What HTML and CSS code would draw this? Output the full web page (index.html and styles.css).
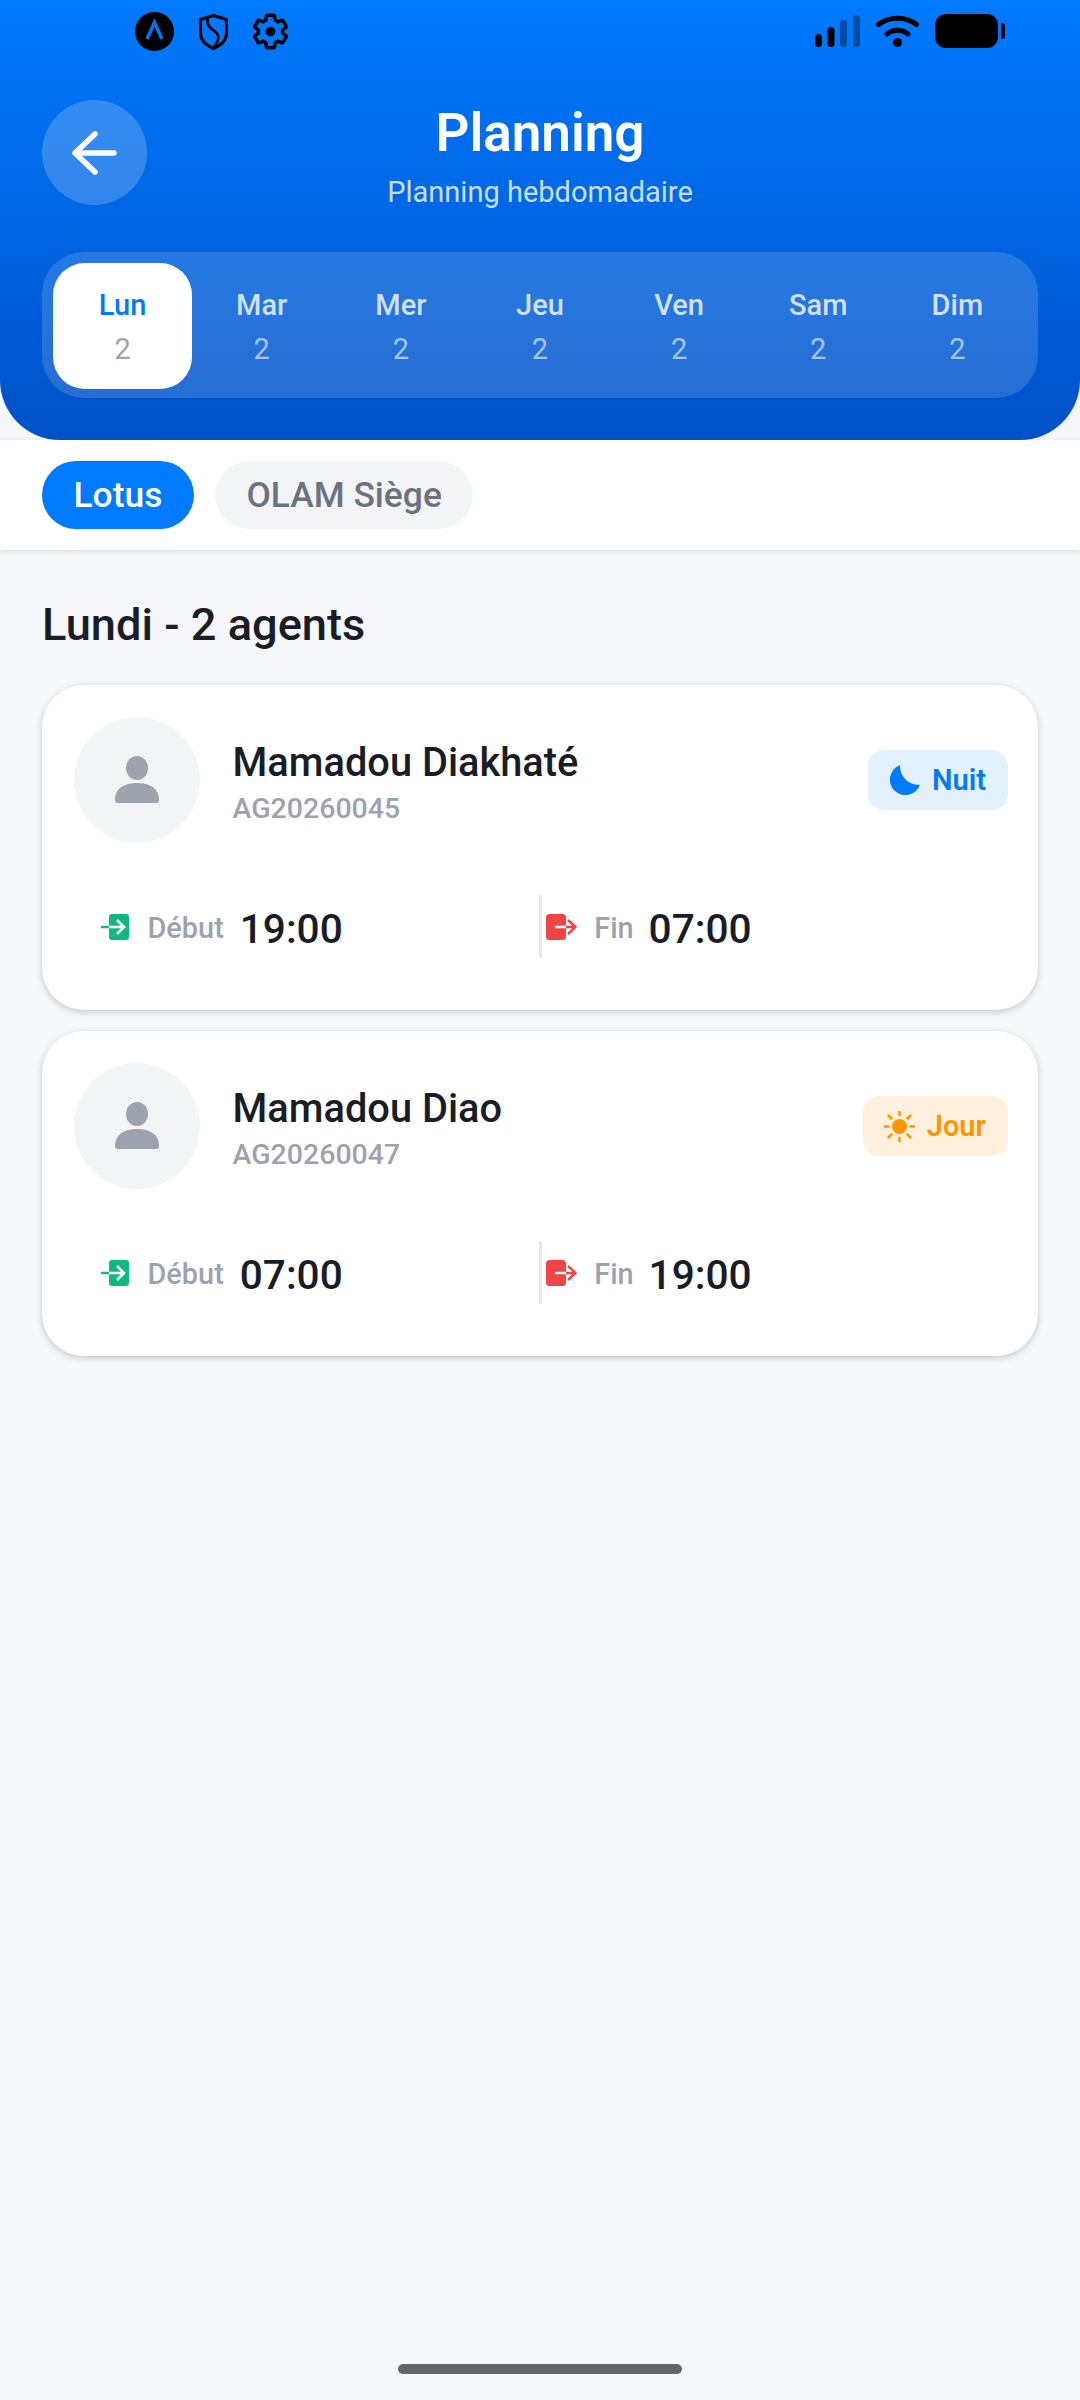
FILE: index.html
```html
<!DOCTYPE html>
<html lang="fr">
<head>
<meta charset="utf-8">
<title>Planning</title>
<link rel="stylesheet" href="styles.css">
</head>
<body>
<div class="page">
  <header class="hero">
    <div class="status">
      <div class="status-left">
        <svg class="i-expo" viewBox="0 0 39 39"><circle cx="19.5" cy="19.5" r="19.5" fill="#000"/><path d="M12 27 19.5 10.500 27 27" fill="none" stroke="#0073f0" stroke-width="3.600"/></svg>
        <svg class="i-shield" viewBox="0 0 29 36"><path d="M14.500 1.500 27.500 5.500V19C27.500 26 21.500 31.500 14.500 34.500 7.500 31.500 1.500 26 1.500 19V5.500Z" fill="none" stroke="#000" stroke-width="3" stroke-linejoin="round"/><path d="M9 4C7 11 11 14 16 17.500 21 21 20 26.500 15 33" fill="none" stroke="#000" stroke-width="2.600"/></svg>
        <svg class="i-gear" viewBox="0 0 24 24"><path d="M19.43 12.98c.04-.32.07-.64.07-.98 0-.34-.03-.66-.07-.98l2.11-1.65c.19-.15.24-.42.12-.64l-2-3.46c-.09-.16-.26-.25-.44-.25-.06 0-.12.01-.17.03l-2.49 1c-.52-.4-1.08-.73-1.69-.98l-.38-2.65C14.46 2.18 14.25 2 14 2h-4c-.25 0-.46.18-.49.42l-.38 2.65c-.61.25-1.17.59-1.69.98l-2.49-1c-.06-.02-.12-.03-.18-.03-.17 0-.34.09-.43.25l-2 3.46c-.13.22-.07.49.12.64l2.11 1.65c-.04.32-.07.65-.07.98 0 .33.03.66.07.98l-2.11 1.65c-.19.15-.24.42-.12.64l2 3.46c.09.16.26.25.44.25.06 0 .12-.01.17-.03l2.49-1c.52.4 1.08.73 1.69.98l.38 2.65c.03.24.24.42.49.42h4c.25 0 .46-.18.49-.42l.38-2.65c.61-.25 1.17-.59 1.69-.98l2.49 1c.06.02.12.03.18.03.17 0 .34-.09.43-.25l2-3.46c.12-.22.07-.49-.12-.64l-2.11-1.65z" fill="none" stroke="#000" stroke-width="2.100"/><circle cx="12" cy="12" r="3" fill="#000"/></svg>
      </div>
      <div class="status-right">
        <svg class="i-signal" viewBox="0 0 45 32"><rect x="0" y="19" width="7" height="13" rx="3.500"/><rect x="12.500" y="12" width="7" height="20" rx="3.500"/><rect x="25" y="5" width="7" height="27" rx="3.500" opacity=".35"/><rect x="38" y="0" width="7" height="32" rx="3.500" opacity=".35"/></svg>
        <svg class="i-wifi" viewBox="0 0 43 32"><path d="M2.500 9.500C13 1 30 1 40.500 9.500" fill="none" stroke="#000" stroke-width="5" stroke-linecap="round"/><path d="M11 19C17 14 26 14 32 19" fill="none" stroke="#000" stroke-width="5" stroke-linecap="round"/><circle cx="21.500" cy="27.500" r="4.500"/></svg>
        <span class="battery"></span>
        <span class="battery-nub"></span>
      </div>
    </div>
    <div class="hero-row">
      <button class="back" type="button">
        <svg viewBox="0 0 46 44"><path d="M3 22H42M23 3 3 22 23 41" fill="none" stroke="#fff" stroke-width="5.500" stroke-linecap="round" stroke-linejoin="round"/></svg>
      </button>
      <div class="hero-titles">
        <h1 class="hero-title">Planning</h1>
        <p class="hero-sub">Planning hebdomadaire</p>
      </div>
      <div class="hero-spacer"></div>
    </div>
    <nav class="days">
      <div class="day day-active"><span class="day-name">Lun</span><span class="day-count">2</span></div>
      <div class="day"><span class="day-name">Mar</span><span class="day-count">2</span></div>
      <div class="day"><span class="day-name">Mer</span><span class="day-count">2</span></div>
      <div class="day"><span class="day-name">Jeu</span><span class="day-count">2</span></div>
      <div class="day"><span class="day-name">Ven</span><span class="day-count">2</span></div>
      <div class="day"><span class="day-name">Sam</span><span class="day-count">2</span></div>
      <div class="day"><span class="day-name">Dim</span><span class="day-count">2</span></div>
    </nav>
  </header>

  <div class="chips">
    <span class="chip chip-active">Lotus</span>
    <span class="chip">OLAM Siège</span>
  </div>

  <main class="content">
    <h2 class="section-title">Lundi - 2 agents</h2>

    <article class="card">
      <div class="card-top">
        <div class="avatar"><svg viewBox="0 0 44 48"><ellipse cx="22" cy="12" rx="11" ry="12"/><path d="M0 44C0 32 10 27 22 27S44 32 44 44C44 46 43 47 41 47H3C1 47 0 46 0 44Z"/></svg></div>
        <div class="agent">
          <div class="agent-name">Mamadou Diakhaté</div>
          <div class="agent-id">AG20260045</div>
        </div>
        <div class="badge badge-night">
          <svg class="badge-icon" viewBox="0 0 29 29"><path d="M10.500 0A14.500 14.500 0 1 0 29 18.500 17 17 0 0 1 10.500 0Z" fill="#007aff"/></svg>
          <span>Nuit</span>
        </div>
      </div>
      <div class="times">
        <div class="time time-start">
          <svg class="time-icon" viewBox="0 0 28 26"><rect x="8" width="20" height="26" rx="3" fill="#10b981"/><path d="M0 13H8" stroke="#10b981" stroke-width="2.500"/><path d="M8 13H22M16 6 23 13 16 20" fill="none" stroke="#fff" stroke-width="2.500"/></svg>
          <span class="time-label">Début</span>
          <span class="time-value">19:00</span>
        </div>
        <div class="time time-end">
          <svg class="time-icon icon-end" viewBox="0 0 31 26"><rect width="20" height="26" rx="3.500" fill="#ef4444"/><path d="M9 13H20" stroke="#fff" stroke-width="2.500"/><path d="M20 13H29M22 6 29.500 13 22 20" fill="none" stroke="#ef4444" stroke-width="2.500"/></svg>
          <span class="time-label">Fin</span>
          <span class="time-value">07:00</span>
        </div>
      </div>
    </article>

    <article class="card">
      <div class="card-top">
        <div class="avatar"><svg viewBox="0 0 44 48"><ellipse cx="22" cy="12" rx="11" ry="12"/><path d="M0 44C0 32 10 27 22 27S44 32 44 44C44 46 43 47 41 47H3C1 47 0 46 0 44Z"/></svg></div>
        <div class="agent">
          <div class="agent-name">Mamadou Diao</div>
          <div class="agent-id">AG20260047</div>
        </div>
        <div class="badge badge-day">
          <svg class="badge-icon" viewBox="0 0 29 29"><circle cx="14.500" cy="14.500" r="7" fill="#ff9500"/><path d="M14.500 0V4M14.500 25V29M0 14.500H4M25 14.500H29M4.300 4.300 7 7M22 22 24.700 24.700M4.300 24.700 7 22M22 7 24.700 4.300" stroke="#ff9500" stroke-width="2.400" stroke-linecap="round"/></svg>
          <span>Jour</span>
        </div>
      </div>
      <div class="times">
        <div class="time time-start">
          <svg class="time-icon" viewBox="0 0 28 26"><rect x="8" width="20" height="26" rx="3" fill="#10b981"/><path d="M0 13H8" stroke="#10b981" stroke-width="2.500"/><path d="M8 13H22M16 6 23 13 16 20" fill="none" stroke="#fff" stroke-width="2.500"/></svg>
          <span class="time-label">Début</span>
          <span class="time-value">07:00</span>
        </div>
        <div class="time time-end">
          <svg class="time-icon icon-end" viewBox="0 0 31 26"><rect width="20" height="26" rx="3.500" fill="#ef4444"/><path d="M9 13H20" stroke="#fff" stroke-width="2.500"/><path d="M20 13H29M22 6 29.500 13 22 20" fill="none" stroke="#ef4444" stroke-width="2.500"/></svg>
          <span class="time-label">Fin</span>
          <span class="time-value">19:00</span>
        </div>
      </div>
    </article>
  </main>

  <div class="home-indicator"></div>
</div>
</body>
</html>
```

FILE: styles.css
```css
* { box-sizing: border-box; margin: 0; padding: 0; }
html, body { width: 1080px; height: 2400px; overflow: hidden; }
body { font-family: Roboto, "Noto Sans", sans-serif; background: #f5f7fa; color: #1a1d26; }
.page { width: 1080px; height: 2400px; display: flex; flex-direction: column; }

.hero { height: 440px; padding: 0 42px; background: linear-gradient(180deg, #007aff 0%, #0051c7 100%); border-radius: 0 0 60px 60px; }
.status { height: 100px; margin-right: -42px; display: flex; justify-content: space-between; align-items: flex-start; }
.status-left { display: flex; align-items: center; padding: 12px 0 0 93px; }
.i-expo { width: 39px; height: 39px; }
.i-shield { width: 29px; height: 36px; margin-left: 25px; }
.i-gear { width: 39px; height: 39px; margin-left: 23px; }
.status-right { display: flex; align-items: flex-start; padding: 14px 75px 0 0; }
.i-signal { width: 45px; height: 32px; margin-top: 1px; }
.i-wifi { width: 43px; height: 32px; margin: 1px 0 0 16px; }
.battery { width: 63px; height: 34px; margin-left: 16px; background: #000; border-radius: 11px; }
.battery-nub { width: 4px; height: 16px; margin: 9px 0 0 3px; background: #000; border-radius: 0 3px 3px 0; }

.hero-row { display: flex; align-items: center; height: 105px; }
.back { width: 105px; height: 105px; flex: none; display: flex; align-items: center; justify-content: center; border: 0; border-radius: 50%; background: rgba(255, 255, 255, .2); }
.back svg { width: 46px; height: 44px; }
.hero-titles { flex: 1; padding-top: 7px; text-align: center; }
.hero-title { font-size: 53px; line-height: 64px; font-weight: 600; color: #fff; }
.hero-sub { font-size: 29px; line-height: 38px; margin-top: 8px; color: rgba(255, 255, 255, .8); }
.hero-spacer { width: 105px; flex: none; }

.days { display: flex; height: 146px; margin-top: 47px; padding: 11px; background: rgba(255, 255, 255, .15); border-radius: 42px; }
.day { flex: 1; height: 126px; padding-top: 24px; display: flex; flex-direction: column; align-items: center; border-radius: 32px; }
.day-active { background: #fff; }
.day-name { font-size: 29px; line-height: 36px; font-weight: 500; color: rgba(255, 255, 255, .8); }
.day-count { font-size: 29px; line-height: 36px; margin-top: 8px; color: rgba(255, 255, 255, .6); }
.day-active .day-name { color: #007aff; }
.day-active .day-count { color: #9ca3af; }

.chips { height: 110px; padding: 21px 42px; display: flex; gap: 21px; background: #fff; box-shadow: 0 1px 4px rgba(0, 0, 0, .14); }
.chip { height: 68px; padding: 0 31.500px; display: flex; align-items: center; border-radius: 34px; background: #f3f4f6; color: #6b7280; font-size: 35.400px; font-weight: 500; }
.chip-active { background: #007aff; color: #fff; }

.content { padding: 50px 42px 0; }
.section-title { font-size: 45.200px; line-height: 50px; font-weight: 500; margin-bottom: 35px; color: #1a1d26; }

.card { height: 325px; margin-bottom: 21px; padding: 32px 30px 0 31.500px; background: #fff; border-radius: 42px; box-shadow: 0 2px 7px rgba(0, 0, 0, .2); }
.card-top { display: flex; align-items: center; height: 126px; }
.avatar { width: 126px; height: 126px; flex: none; display: flex; align-items: center; justify-content: center; border-radius: 50%; background: #f3f4f6; }
.avatar svg { width: 44px; height: 48px; fill: #9ca3af; }
.agent { flex: 1; margin-left: 33px; padding-top: 5px; }
.agent-name { font-size: 39.800px; line-height: 48px; font-weight: 500; color: #1a1d26; }
.agent-id { font-size: 28.500px; line-height: 36px; font-weight: 500; margin-top: 4px; color: #9ca3af; }
.badge { height: 60px; padding: 0 22px 0 21px; display: flex; align-items: center; gap: 12px; border-radius: 16px; font-size: 29px; font-weight: 600; }
.badge-night { background: #e3f1fd; color: #007aff; }
.badge-day { background: #fff0de; color: #ff9500; }
.badge-icon { width: 31px; height: 31px; }

.times { display: flex; height: 63px; margin-top: 52px; margin-right: 3px; }
.time { flex: none; width: 50%; display: flex; align-items: center; }
.time-start { padding-left: 27px; }
.time-end { padding-left: 4px; border-left: 3px solid #e5e7eb; }
.time-icon { width: 28px; height: 26px; flex: none; }
.icon-end { width: 31px; }
.time-label { margin-left: 19px; padding-top: 3px; font-size: 28.900px; font-weight: 500; color: #9ca3af; }
.time-value { margin-left: 16px; padding-top: 5px; font-size: 40.600px; font-weight: 500; color: #1a1d26; }
.time-end .time-label { margin-left: 17px; }
.time-end .time-value { margin-left: 15px; }

.home-indicator { width: 284px; height: 10px; margin: auto auto 26px; background: #636466; border-radius: 5px; }
```
